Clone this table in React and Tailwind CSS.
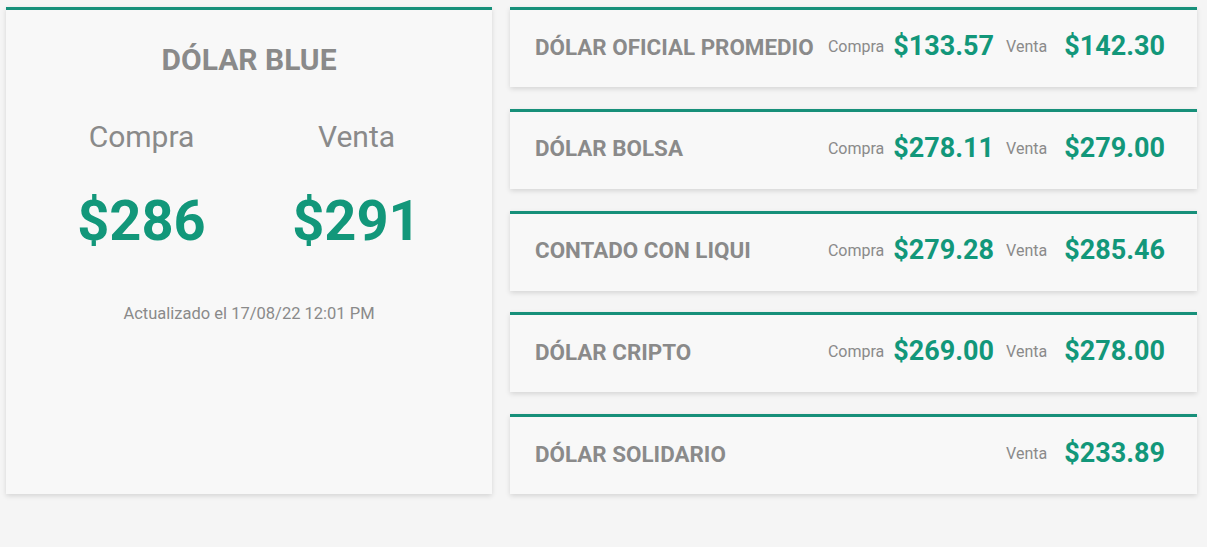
import React from "react";

const blue = { compra: "$286", venta: "$291", fecha: "17/08/22 12:01 PM" };

const otros = [
  { nombre: "DÓLAR OFICIAL PROMEDIO", compra: "$133.57", venta: "$142.30" },
  { nombre: "DÓLAR BOLSA", compra: "$278.11", venta: "$279.00" },
  { nombre: "CONTADO CON LIQUI", compra: "$279.28", venta: "$285.46" },
  { nombre: "DÓLAR CRIPTO", compra: "$269.00", venta: "$278.00" },
  { nombre: "DÓLAR SOLIDARIO", compra: null, venta: "$233.89" },
];

function Cotizacion({ item }) {
  return (
    <div className="h-[80px] bg-[#f8f8f8] border-t-[3px] border-[#17907a] shadow-[0_2px_5px_rgba(0,0,0,0.13)] flex items-center pl-[25px] pr-[32px] pb-[4px]">
      <div className="text-[22.4px] leading-[22px] font-bold text-[#8a8a8a]">{item.nombre}</div>
      <div className="ml-auto flex items-center">
        {item.compra && (
          <>
            <span className="text-[16px] text-[#8a8a8a] mt-[1px]">Compra</span>
            <span className="ml-[9px] text-[27px] leading-[27px] font-bold text-[#12977a]">{item.compra}</span>
          </>
        )}
        <span className="ml-[12px] text-[16px] text-[#8a8a8a] mt-[1px]">Venta</span>
        <span className="ml-[17px] text-[27px] leading-[27px] font-bold text-[#12977a]">{item.venta}</span>
      </div>
    </div>
  );
}

export default function App() {
  return (
    <div className="min-h-[547px] bg-[#f5f5f5] font-['Roboto',sans-serif] pl-[6px] pt-[7px]">
      <div className="grid grid-cols-[486px_687px] gap-[18px]">
        {/* dólar blue */}
        <div className="h-[487px] bg-[#f8f8f8] border-t-[3px] border-[#17907a] shadow-[0_2px_5px_rgba(0,0,0,0.13)] px-[28px] pt-[35px] text-center">
          <h1 className="text-[30px] leading-[30px] font-bold text-[#8a8a8a]">DÓLAR BLUE</h1>
          <div className="grid grid-cols-2 mt-[47px]">
            <div>
              <div className="text-[30px] leading-[30px] text-[#8a8a8a]">Compra</div>
              <div className="mt-[41px] text-[56px] leading-[56px] font-bold text-[#12977a]">{blue.compra}</div>
            </div>
            <div>
              <div className="text-[30px] leading-[30px] text-[#8a8a8a]">Venta</div>
              <div className="mt-[41px] text-[56px] leading-[56px] font-bold text-[#12977a]">{blue.venta}</div>
            </div>
          </div>
          <p className="mt-[57px] text-[16.5px] leading-[16.5px] text-[#8a8a8a]">Actualizado el {blue.fecha}</p>
        </div>

        {/* resto de cotizaciones */}
        <div className="flex flex-col justify-between">
          {otros.map((o) => (
            <Cotizacion key={o.nombre} item={o} />
          ))}
        </div>
      </div>
    </div>
  );
}
